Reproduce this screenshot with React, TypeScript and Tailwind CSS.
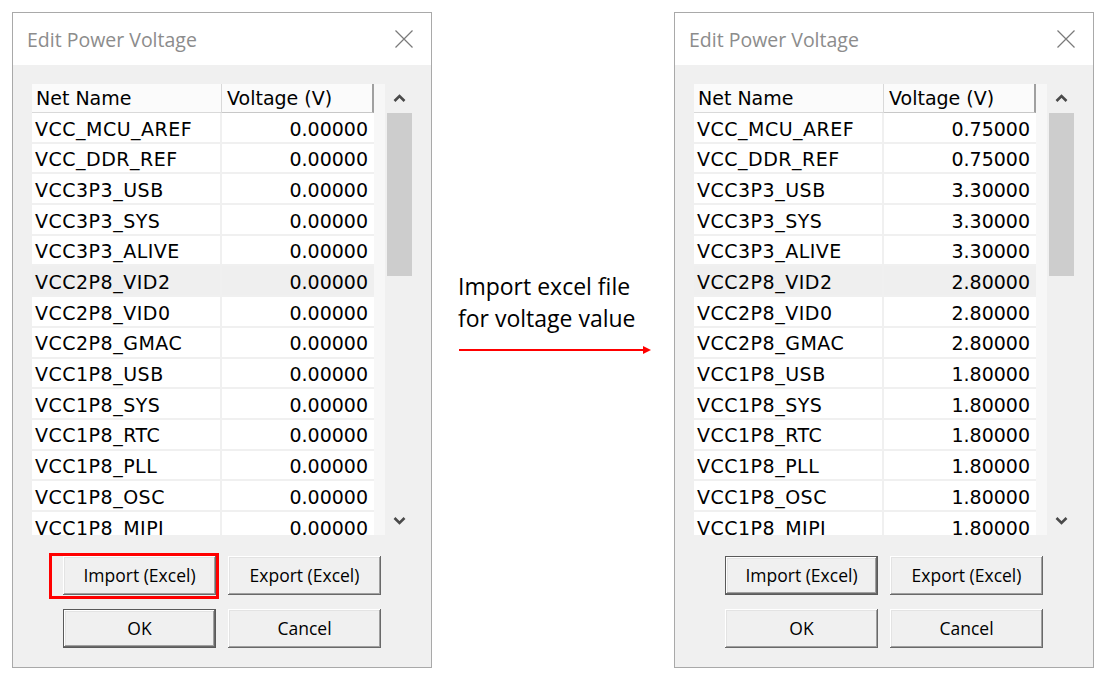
import React from "react";

const nets = [
  "VCC_MCU_AREF",
  "VCC_DDR_REF",
  "VCC3P3_USB",
  "VCC3P3_SYS",
  "VCC3P3_ALIVE",
  "VCC2P8_VID2",
  "VCC2P8_VID0",
  "VCC2P8_GMAC",
  "VCC1P8_USB",
  "VCC1P8_SYS",
  "VCC1P8_RTC",
  "VCC1P8_PLL",
  "VCC1P8_OSC",
  "VCC1P8_MIPI",
];

const before = nets.map(() => "0.00000");
const after = [
  "0.75000",
  "0.75000",
  "3.30000",
  "3.30000",
  "3.30000",
  "2.80000",
  "2.80000",
  "2.80000",
  "1.80000",
  "1.80000",
  "1.80000",
  "1.80000",
  "1.80000",
  "1.80000",
];

function Chevron({ down }: { down?: boolean }) {
  return (
    <svg width="13" height="9" viewBox="0 0 13 9">
      <path
        d={down ? "M1.5 2 L6.5 7 L11.5 2" : "M1.5 7 L6.5 2 L11.5 7"}
        fill="none"
        stroke="#4a4a4a"
        strokeWidth="2.6"
      />
    </svg>
  );
}

function WinButton({
  label,
  isDefault,
  highlight,
}: {
  label: string;
  isDefault?: boolean;
  highlight?: boolean;
}) {
  return (
    <div className="relative">
      <div
        className={
          isDefault
            ? "w-[153px] h-[39px] flex items-center justify-center bg-[#f0f0f0] border border-[#5a5a5a] shadow-[inset_-1px_-1px_0_#696969,inset_1px_1px_0_#ffffff,inset_-2px_-2px_0_#a0a0a0,inset_2px_2px_0_#e3e3e3] text-[17.5px] text-black"
            : "w-[153px] h-[39px] flex items-center justify-center bg-[#f0f0f0] shadow-[inset_-1px_-1px_0_#696969,inset_1px_1px_0_#ffffff,inset_-2px_-2px_0_#a0a0a0,inset_2px_2px_0_#e3e3e3] text-[17.5px] text-black"
        }
        style={{ fontFamily: '"Open Sans", "Noto Sans", sans-serif' }}
      >
        {label}
      </div>
      {highlight && (
        <div className="absolute -left-[14px] -top-[3px] -right-[3px] -bottom-[4px] border-[3px] border-[#ff0000]" />
      )}
    </div>
  );
}

function VoltageDialog({
  values,
  importDefault,
  markImport,
}: {
  values: string[];
  importDefault?: boolean;
  markImport?: boolean;
}) {
  return (
    <div className="w-[420px] h-[656px] shrink-0 border border-[#a9a9a9] bg-[#f0f0f0] flex flex-col">
      {/* Title bar */}
      <div className="h-[52px] bg-white flex items-center justify-between pl-[14px] pr-[18px]">
        <span
          className="text-[19.5px] text-[#8c8c8c] pt-[2px]"
          style={{ fontFamily: '"Open Sans", "Noto Sans", sans-serif' }}
        >
          Edit Power Voltage
        </span>
        <svg width="18" height="18" viewBox="0 0 18 18">
          <path d="M0.5 0.5 L17.5 17.5 M17.5 0.5 L0.5 17.5" stroke="#7a7a7a" strokeWidth="1.2" />
        </svg>
      </div>

      {/* List */}
      <div
        className="mt-[19px] ml-[19px] w-[382px] h-[451px] bg-white flex text-[19px] text-black"
        style={{ fontFamily: '"DejaVu Sans", Verdana, sans-serif' }}
      >
        <div className="w-[342px] flex flex-col">
          <div className="h-[29px] flex">
            <div className="w-[190px] flex items-center pl-[4px] pt-[1px] bg-[#fbfbfb] border-r border-b border-[#d9d9d9]">
              Net Name
            </div>
            <div className="w-[152px] flex items-center pl-[5px] pt-[1px] bg-[#fbfbfb] border-r-2 border-b border-r-[#a0a0a0] border-b-[#c8c8c8]">
              Voltage (V)
            </div>
          </div>
          <div className="h-[422px] overflow-hidden">
            {nets.map((n, i) => (
              <div
                key={n}
                className={
                  i === 5
                    ? "h-[30.7px] flex bg-[#efefef] border-b-2 border-[#f0f0f0]"
                    : "h-[30.7px] flex bg-white border-b-2 border-[#f0f0f0]"
                }
              >
                <div className="w-[190px] flex items-center pl-[3px] pt-[3px] tracking-[0.5px] border-r-2 border-[#f0f0f0] whitespace-nowrap">
                  {n}
                </div>
                <div className="w-[152px] flex items-center justify-end pr-[6px] pt-[3px]">
                  {values[i]}
                </div>
              </div>
            ))}
          </div>
        </div>
        <div className="w-[11px] bg-[#f7f7f7]" />
        <div className="w-[29px] bg-[#f0f0f0] flex flex-col items-center">
          <div className="h-[29px] w-full flex items-center justify-center">
            <Chevron />
          </div>
          <div className="w-[25px] h-[163px] bg-[#cdcdcd]" />
          <div className="flex-1" />
          <div className="h-[29px] w-full flex items-center justify-center">
            <Chevron down />
          </div>
        </div>
      </div>

      {/* Buttons */}
      <div className="mt-[21px] flex justify-center gap-[12px]">
        <WinButton label="Import (Excel)" isDefault={importDefault} highlight={markImport} />
        <WinButton label="Export (Excel)" />
      </div>
      <div className="mt-[14px] flex justify-center gap-[12px]">
        <WinButton label="OK" isDefault={!importDefault} />
        <WinButton label="Cancel" />
      </div>
    </div>
  );
}

export default function App() {
  return (
    <div className="w-[1112px] h-[682px] bg-white flex items-start overflow-hidden">
      <div className="ml-[12px] mt-[12px]">
        <VoltageDialog values={before} markImport />
      </div>

      {/* Annotation */}
      <div className="w-[242px] shrink-0 mt-[270px] pl-[26px] flex flex-col">
        <div
          className="text-[23px] leading-[32px] text-black"
          style={{ fontFamily: '"Open Sans", "Noto Sans", sans-serif' }}
        >
          <div>Import excel file</div>
          <div>for voltage value</div>
        </div>
        <svg className="mt-[11px]" width="194" height="10" viewBox="0 0 194 10">
          <line x1="1" y1="5" x2="186" y2="5" stroke="#ff0000" strokeWidth="2" />
          <path d="M185 1 L193 5 L185 9 Z" fill="#ff0000" />
        </svg>
      </div>

      <div className="mt-[12px]">
        <VoltageDialog values={after} importDefault />
      </div>
    </div>
  );
}
